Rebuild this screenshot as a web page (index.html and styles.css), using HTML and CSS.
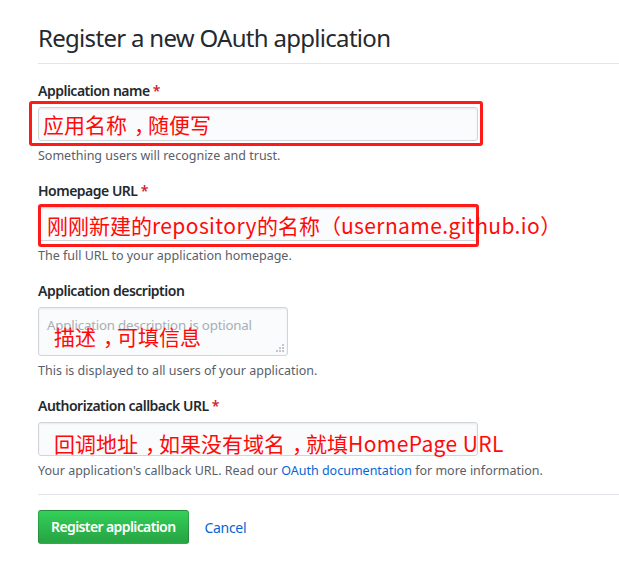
FILE: index.html
```html
<!DOCTYPE html>
<html lang="en">
<head>
<meta charset="utf-8">
<title>Register a new OAuth application</title>
<link rel="stylesheet" href="styles.css">
</head>
<body>
<div class="page">
  <h1 class="title">Register a new OAuth application</h1>
  <form class="form">
    <div class="group">
      <div class="label">Application name <span class="req">*</span></div>
      <div class="field">
        <div class="input input-wide"></div>
        <span class="mark mark-1"></span>
        <span class="anno anno-1">应用名称<span class="comma">，</span>随便写</span>
      </div>
      <div class="note">Something users will recognize and trust.</div>
    </div>
    <div class="group">
      <div class="label">Homepage URL <span class="req">*</span></div>
      <div class="field">
        <div class="input input-wide"></div>
        <span class="mark mark-2"></span>
        <span class="anno anno-2">刚刚新建的<span class="latin">repository</span>的名称<span class="punct">（</span><span class="latin">username.github.io</span><span class="punct">）</span></span>
      </div>
      <div class="note">The full URL to your application homepage.</div>
    </div>
    <div class="group">
      <div class="label">Application description</div>
      <div class="field">
        <div class="textarea">
          <span class="placeholder">Application description is optional</span>
          <svg class="grip" width="8" height="8" viewBox="0 0 8 8" aria-hidden="true">
            <rect x="6" y="0" width="2" height="2" fill="#c3c8cd"/>
            <rect x="3" y="3" width="2" height="2" fill="#c3c8cd"/>
            <rect x="6" y="3" width="2" height="2" fill="#c3c8cd"/>
            <rect x="0" y="6" width="2" height="2" fill="#c3c8cd"/>
            <rect x="3" y="6" width="2" height="2" fill="#c3c8cd"/>
            <rect x="6" y="6" width="2" height="2" fill="#c3c8cd"/>
          </svg>
        </div>
        <span class="anno anno-3">描述<span class="comma">，</span>可填信息</span>
      </div>
      <div class="note">This is displayed to all users of your application.</div>
    </div>
    <div class="group">
      <div class="label">Authorization callback URL <span class="req">*</span></div>
      <div class="field">
        <div class="input input-wide"></div>
        <span class="anno anno-4">回调地址<span class="comma">，</span>如果没有域名<span class="comma">，</span>就填<span class="latin">HomePage URL</span></span>
      </div>
      <div class="note">Your application's callback URL. Read our <a class="link" href="#">OAuth documentation</a> for more information.</div>
    </div>
    <div class="actions">
      <button type="button" class="btn-primary">Register application</button>
      <a class="btn-link" href="#">Cancel</a>
    </div>
  </form>
</div>
</body>
</html>
```
FILE: styles.css
```css
* { box-sizing: border-box; }
html, body { margin: 0; padding: 0; background: #fff; }
body {
  font-family: "Noto Sans", "Open Sans", sans-serif;
  color: #24292e;
  font-size: 14px;
}
.page { padding: 23px 0 0 38px; }
.title {
  margin: 0;
  font-size: 24px;
  font-weight: 400;
  line-height: 30px;
  padding-bottom: 10px;
  border-bottom: 1px solid #e1e4e8;
  letter-spacing: -0.7px;
}
.form { margin-top: 17px; }
.group { margin-bottom: 16px; }
.label {
  font-size: 14px;
  font-weight: 600;
  line-height: 20px;
  margin-bottom: 6px;
  letter-spacing: -0.5px;
}
.req { color: #cb2431; }
.field { position: relative; }
.input {
  height: 34px;
  background: #fafbfc;
  border: 1px solid #d1d5da;
  border-radius: 3px;
  box-shadow: inset 0 1px 2px rgba(27,31,35,0.075);
}
.input-wide { width: 440px; }
.textarea {
  position: relative;
  width: 250px;
  height: 49px;
  background: #fafbfc;
  border: 1px solid #d1d5da;
  border-radius: 3px;
  box-shadow: inset 0 1px 2px rgba(27,31,35,0.075);
  padding: 7px 8px;
}
.placeholder {
  font-size: 13.3px;
  line-height: 20px;
  color: #a8aeb4;
  letter-spacing: -0.2px;
  white-space: nowrap;
}
.grip { position: absolute; right: 3px; bottom: 3px; }
.note {
  margin-top: 6px;
  font-size: 12.5px;
  line-height: 18px;
  color: #586069;
}
.link { color: #0366d6; text-decoration: none; }
.mark {
  position: absolute;
  border: 3px solid #ff1a1a;
  border-radius: 3px;
}
.mark-1 { left: -9px; top: -6px; width: 454px; height: 45px; }
.mark-2 { left: 0; top: -3px; width: 441px; height: 43px; }
.anno {
  position: absolute;
  font-family: "Noto Sans CJK SC", sans-serif;
  font-size: 21px;
  line-height: 28px;
  color: #ff0a0a;
  white-space: nowrap;
}
.punct { font-family: "Noto Sans CJK TC", sans-serif; }
.comma { margin-left: 7px; margin-right: -7px; }
.latin { letter-spacing: 0.4px; }
.anno-1 { left: 5px; top: 3px; }
.anno-2 { left: 9px; top: 4px; }
.anno-3 { left: 16px; top: 15px; }
.anno-4 { left: 16px; top: 7px; }
.actions {
  margin-top: -2px;
  border-top: 1px solid #e1e4e8;
  padding-top: 15px;
  display: flex;
  align-items: center;
}
.btn-primary {
  height: 34px;
  padding: 6px 12px;
  font-family: inherit;
  font-size: 14px;
  font-weight: 600;
  line-height: 20px;
  color: #fff;
  background: linear-gradient(180deg, #34d058 0%, #28a745 90%);
  border: 1px solid rgba(27,31,35,0.2);
  border-radius: 3px;
  letter-spacing: -0.6px;
}
.btn-link {
  margin-left: 16px;
  font-size: 14px;
  color: #0366d6;
  text-decoration: none;
  letter-spacing: -0.3px;
}
```
